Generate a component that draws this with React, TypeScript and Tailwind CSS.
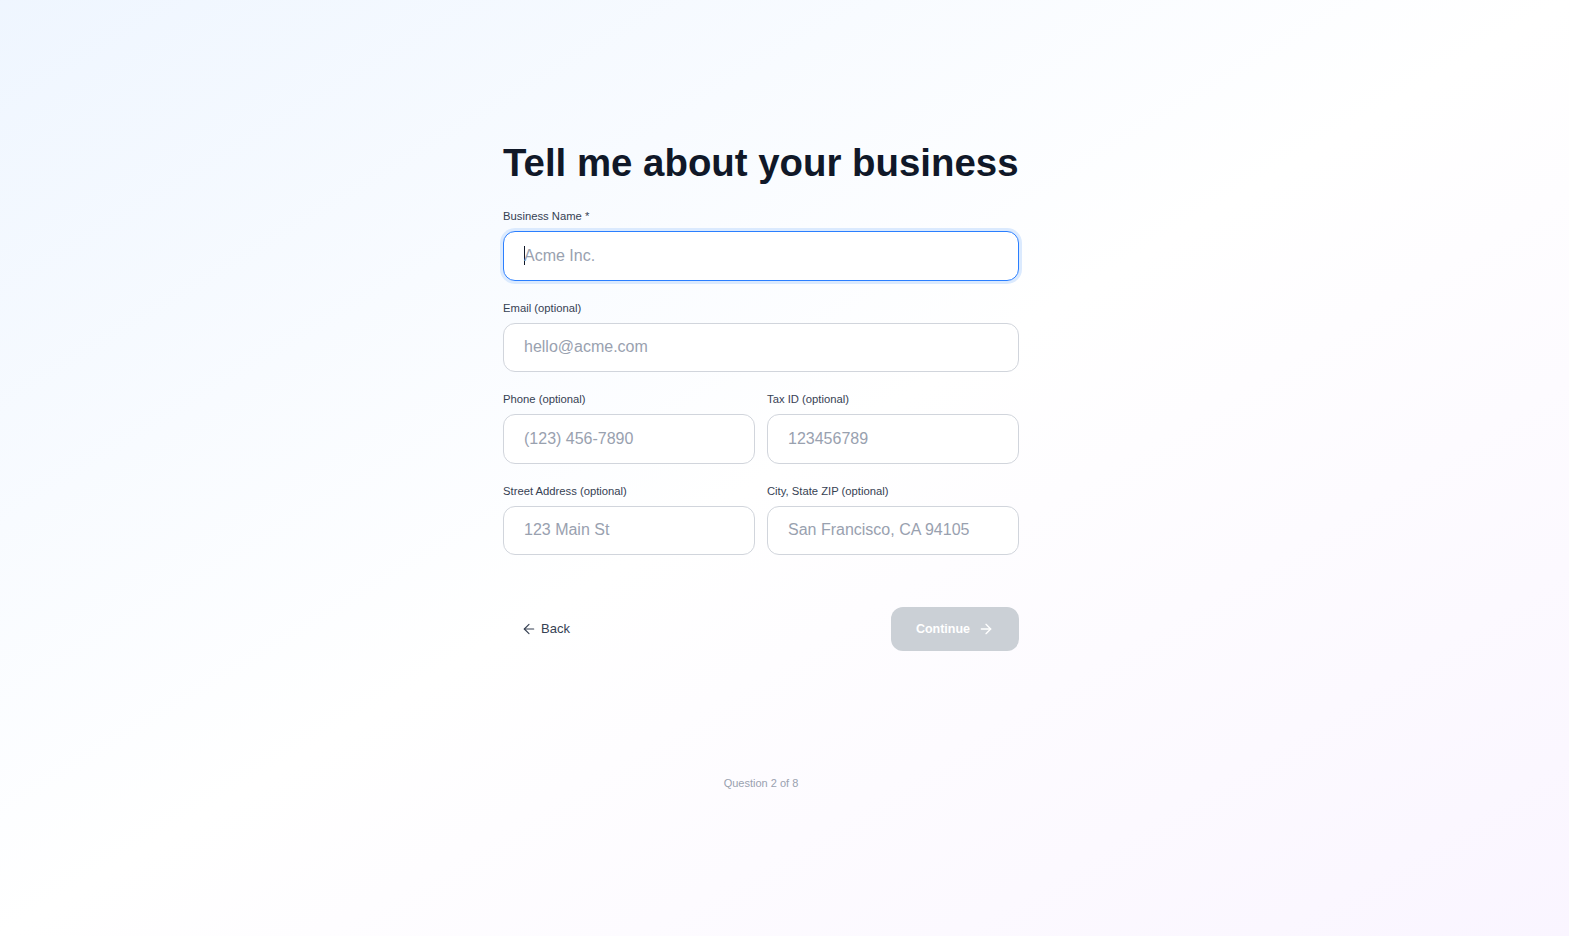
import React from "react";
import { ArrowLeft, ArrowRight } from "lucide-react";

function Field({ label, placeholder, focused }: { label: string; placeholder: string; focused?: boolean }) {
  return (
    <div className="flex flex-col">
      <label className="mb-[7px] text-[11.25px] leading-4 text-gray-700">{label}</label>
      <div
        className={
          focused
            ? "flex h-[49.5px] items-center rounded-xl border border-blue-500 bg-white px-5 ring-[3px] ring-blue-100"
            : "flex h-[49.5px] items-center rounded-xl border border-gray-300 bg-white px-5"
        }
      >
        {focused && <span className="mr-[-1px] h-[19px] w-px bg-gray-900" />}
        <span className="text-base text-gray-400">{placeholder}</span>
      </div>
    </div>
  );
}

export default function App() {
  return (
    <div
      className="flex min-h-[936px] w-full justify-center bg-gradient-to-br from-blue-50 via-white to-purple-50 pr-[47px]"
      style={{ fontFamily: '"Liberation Sans", Arial, sans-serif' }}
    >
      <div className="flex w-[516px] flex-col pt-[140px]">
        <h1 className="text-[38.4px] font-bold leading-[46px] text-gray-900">Tell me about your business</h1>
        <div className="mt-[22px] flex flex-col gap-[19px]">
          <Field label="Business Name *" placeholder="Acme Inc." focused />
          <Field label="Email (optional)" placeholder="hello@acme.com" />
          <div className="grid grid-cols-2 gap-3">
            <Field label="Phone (optional)" placeholder="(123) 456-7890" />
            <Field label="Tax ID (optional)" placeholder="123456789" />
          </div>
          <div className="grid grid-cols-2 gap-3">
            <Field label="Street Address (optional)" placeholder="123 Main St" />
            <Field label="City, State ZIP (optional)" placeholder="San Francisco, CA 94105" />
          </div>
        </div>
        <div className="mt-[52px] flex items-center justify-between">
          <button className="flex items-center gap-1 py-3 pl-[18px] pr-4 text-[13px] text-gray-700">
            <ArrowLeft className="h-4 w-4" strokeWidth={1.75} />
            Back
          </button>
          <button className="flex h-[44px] w-[128px] items-center justify-center gap-2 rounded-xl bg-[#cbd0d6] text-[12.5px] font-bold text-white">
            Continue
            <ArrowRight className="h-4 w-4" strokeWidth={2} />
          </button>
        </div>
        <div className="mt-[124px] text-center text-[11px] leading-4 text-gray-400">Question 2 of 8</div>
      </div>
    </div>
  );
}
